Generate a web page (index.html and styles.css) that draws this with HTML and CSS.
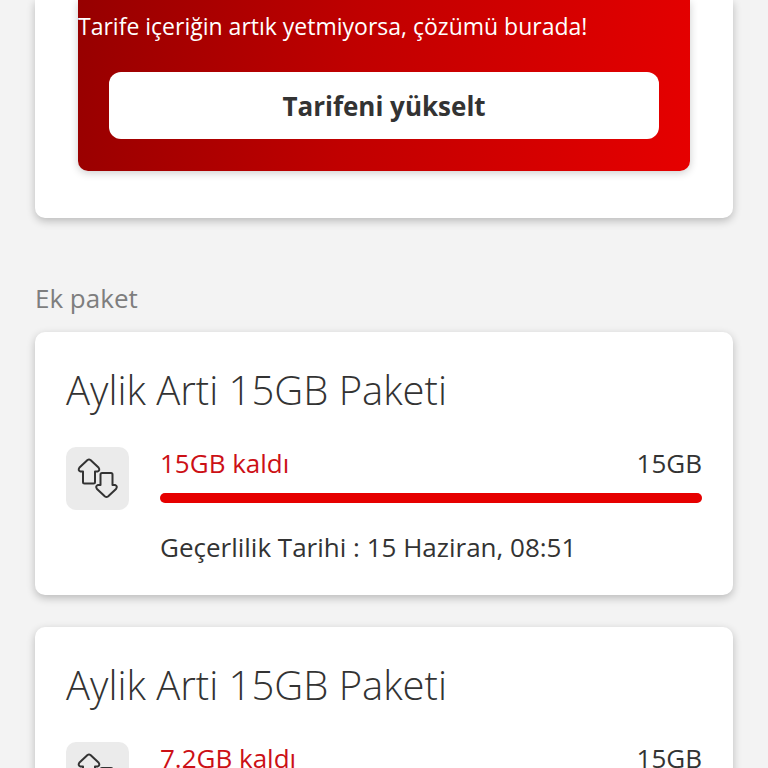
FILE: index.html
```html
<!DOCTYPE html>
<html lang="tr">
<head>
    <meta charset="UTF-8">
    <meta name="viewport" content="width=device-width, initial-scale=1.0">
    <title>Ek paket</title>
    <link rel="stylesheet" href="styles.css">
</head>
<body>
    <main class="page">
        <section class="card tariff">
            <div class="banner">
                <p class="banner-text">Tarife içeriğin artık yetmiyorsa, çözümü burada!</p>
                <button type="button" class="upgrade">Tarifeni yükselt</button>
            </div>
        </section>

        <h2 class="section-title">Ek paket</h2>

        <article class="card package">
            <h3 class="package-name">Aylik Arti 15GB Paketi</h3>
            <div class="package-body">
                <div class="icon">
                    <svg viewBox="0 0 63 63" aria-hidden="true">
                        <path d="M21.500 13Q23 12 24.500 13L32.500 20.500Q34.500 23.500 31.500 24.500H29V35Q29 36.500 27.500 36.500H18.500Q17 36.500 17 35V24.500H14.500Q11.500 23.500 13.500 20.500Z"/>
                        <path d="M36 26H45Q46.500 26 46.500 27.500V38H49Q52 39 50 42L42 49.500Q40.500 50.500 39 49.500L31 42Q29 39 32 38H34.500V27.500Q34.500 26 36 26Z"/>
                    </svg>
                </div>
                <div class="usage">
                    <div class="usage-row">
                        <span class="remaining">15GB kaldı</span>
                        <span>15GB</span>
                    </div>
                    <div class="bar"><div class="bar-fill" style="width: 100%"></div></div>
                    <p class="expiry">Geçerlilik Tarihi : 15 Haziran, 08:51</p>
                </div>
            </div>
        </article>

        <article class="card package">
            <h3 class="package-name">Aylik Arti 15GB Paketi</h3>
            <div class="package-body">
                <div class="icon">
                    <svg viewBox="0 0 63 63" aria-hidden="true">
                        <path d="M21.500 13Q23 12 24.500 13L32.500 20.500Q34.500 23.500 31.500 24.500H29V35Q29 36.500 27.500 36.500H18.500Q17 36.500 17 35V24.500H14.500Q11.500 23.500 13.500 20.500Z"/>
                        <path d="M36 26H45Q46.500 26 46.500 27.500V38H49Q52 39 50 42L42 49.500Q40.500 50.500 39 49.500L31 42Q29 39 32 38H34.500V27.500Q34.500 26 36 26Z"/>
                    </svg>
                </div>
                <div class="usage">
                    <div class="usage-row">
                        <span class="remaining">7.2GB kaldı</span>
                        <span>15GB</span>
                    </div>
                </div>
            </div>
        </article>
    </main>
</body>
</html>
```

FILE: styles.css
```css
* {
    box-sizing: border-box;
}
body {
    font-family: "Open Sans", "Noto Sans", sans-serif;
    background-color: #f3f3f3;
    color: #333;
    margin: 0;
}
h2, h3, p {
    margin: 0;
}
.page {
    padding: 0 35px;
}
.card {
    background-color: #fff;
    border-radius: 10px;
    box-shadow: 0 3px 8px rgba(0, 0, 0, 0.24);
}
.tariff {
    padding: 0 43px 47px;
    border-radius: 0 0 10px 10px;
}
.banner {
    padding: 8px 0 32px;
    background: linear-gradient(100deg, #960000, #c00000 45%, #e60000);
    border-radius: 0 0 10px 10px;
    box-shadow: 0 2px 8px rgba(0, 0, 0, 0.2);
}
.banner-text {
    font-size: 23px;
    line-height: 36px;
    color: #fff;
}
.upgrade {
    display: block;
    width: calc(100% - 62px);
    height: 67px;
    margin: 28px auto 0;
    padding: 0;
    background-color: #fff;
    color: #333;
    border: none;
    border-radius: 12px;
    font-family: inherit;
    font-size: 26px;
    font-weight: bold;
    cursor: pointer;
}
.section-title {
    padding: 63px 0 17px;
    font-size: 26px;
    font-weight: normal;
    line-height: 34px;
    color: #7e7e7e;
}
.package {
    margin-bottom: 32px;
    padding: 28px 31px 32px;
}
.package-name {
    font-size: 40px;
    font-weight: 300;
    line-height: 60px;
}
.package-body {
    display: flex;
    gap: 31px;
    margin-top: 27px;
}
.icon {
    flex: none;
    width: 63px;
    height: 63px;
    background-color: #ebebeb;
    border-radius: 10px;
}
.icon svg {
    display: block;
    fill: none;
    stroke: #333;
    stroke-width: 2;
    stroke-linejoin: round;
}
.usage {
    flex: 1;
    font-size: 26px;
    line-height: 32px;
}
.usage-row {
    display: flex;
    justify-content: space-between;
}
.remaining {
    color: #cc1016;
}
.bar {
    height: 10px;
    margin-top: 14px;
    background-color: #ebebeb;
    border-radius: 5px;
}
.bar-fill {
    height: 100%;
    background-color: #e60000;
    border-radius: 5px;
}
.expiry {
    margin-top: 28px;
}
```
